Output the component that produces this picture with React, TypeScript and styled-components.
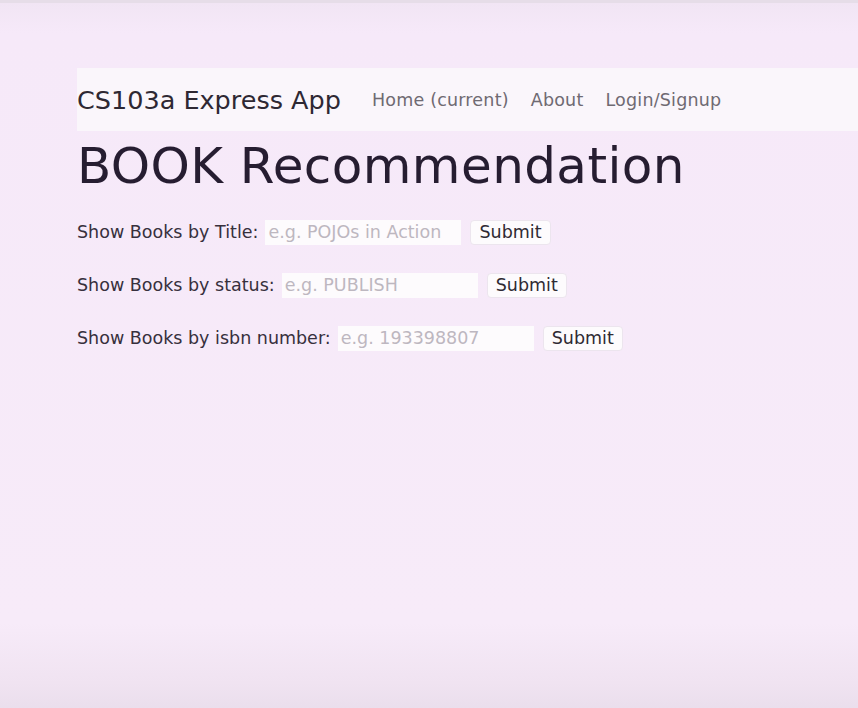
import React from "react";
import styled, { createGlobalStyle } from "styled-components";

const Global = createGlobalStyle`
  html, body { margin: 0; padding: 0; }
  body {
    font-family: "DejaVu Sans", "Liberation Sans", sans-serif;
    background: #f6eaf9;
  }
`;

const Page = styled.div`
  min-height: 708px;
  box-sizing: border-box;
  background: linear-gradient(to bottom, #f1e5f4 0px, #f6e9f9 30px, #f7ebf9 620px, #f0e3f1 680px, #eadeec 708px);
  border-top: 3px solid #e6dde8;
  padding: 65px 0 0 77px;
`;

const Navbar = styled.nav`
  display: flex;
  align-items: center;
  height: 63px;
  background: #faf6fb;
`;

const Brand = styled.a`
  font-size: 25.5px;
  color: #2e2833;
  margin-right: 31px;
`;

const NavLinks = styled.div`
  display: flex;
  gap: 22px;
`;

const NavLink = styled.a`
  font-size: 17.5px;
  color: #6f6a72;
  letter-spacing: 0.2px;
`;

const Heading = styled.h1`
  margin: 5px 0 23px 0;
  font-weight: normal;
  font-size: 50px;
  line-height: 60px;
  color: #261d31;
  letter-spacing: 0.4px;
`;

const Form = styled.form`
  display: flex;
  flex-direction: column;
  gap: 27px;
`;

const Row = styled.div`
  display: flex;
  align-items: center;
  height: 26px;
`;

const Label = styled.label`
  font-size: 17.5px;
  color: #37303d;
  margin-right: 7px;
`;

const Input = styled.input`
  width: 196px;
  height: 25px;
  box-sizing: border-box;
  border: none;
  background: #fdfbfd;
  padding: 0 3px;
  font-family: inherit;
  font-size: 17.5px;
  color: #333;
  margin-right: 9px;
  outline: none;
  &::placeholder { color: #bdb7c0; }
`;

const Button = styled.button`
  height: 25px;
  padding: 0 8px;
  box-sizing: border-box;
  background: #fdfbfd;
  border: 1px solid #ece5ee;
  border-radius: 4px;
  font-family: inherit;
  font-size: 17.5px;
  color: #2f2a33;
`;

const rows = [
  { label: "Show Books by Title:", ph: "e.g. POJOs in Action" },
  { label: "Show Books by status:", ph: "e.g. PUBLISH" },
  { label: "Show Books by isbn number:", ph: "e.g. 193398807" },
];

export default function App() {
  return (
    <>
      <Global />
      <Page>
        <Navbar>
          <Brand>CS103a Express App</Brand>
          <NavLinks>
            <NavLink>Home (current)</NavLink>
            <NavLink>About</NavLink>
            <NavLink>Login/Signup</NavLink>
          </NavLinks>
        </Navbar>
        <Heading>BOOK Recommendation</Heading>
        <Form onSubmit={(e) => e.preventDefault()}>
          {rows.map((r) => (
            <Row key={r.label}>
              <Label>{r.label}</Label>
              <Input placeholder={r.ph} />
              <Button type="button">Submit</Button>
            </Row>
          ))}
        </Form>
      </Page>
    </>
  );
}
